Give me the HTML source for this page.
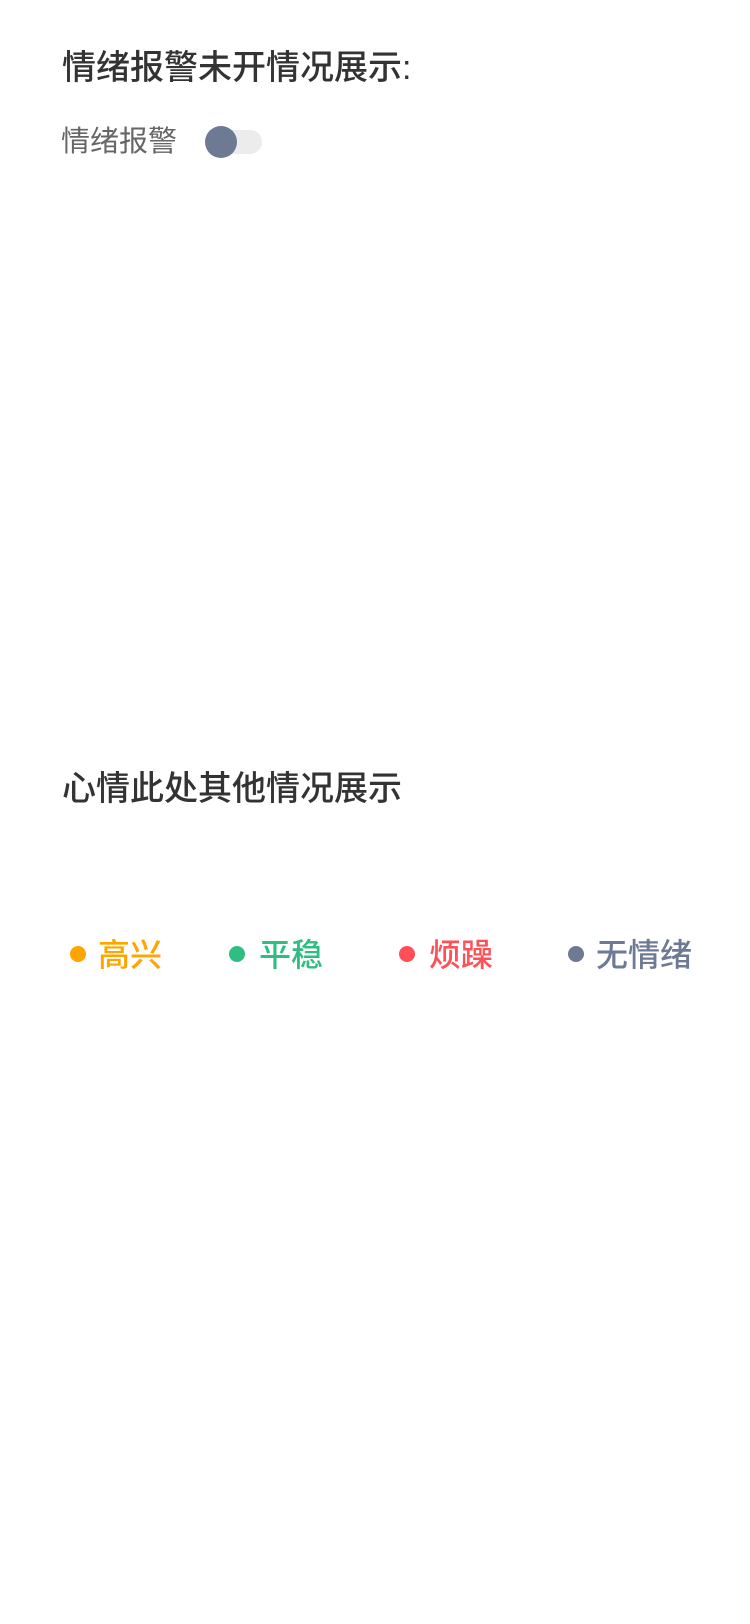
<!DOCTYPE html>
<html><head><meta charset="utf-8"><style>
body{margin:0;width:750px;height:1624px;background:#fff;font-family:"Liberation Sans","Noto Sans CJK SC",sans-serif;position:relative;overflow:hidden}
.a{position:absolute;white-space:nowrap;line-height:1}
.t{font-size:34px;color:#333;left:62px;font-weight:500}
.dot{position:absolute;width:16px;height:16px;border-radius:50%}
.l{font-size:32px;position:absolute;line-height:1;font-weight:500}
</style></head><body>
<div class="a t" style="top:51px">情绪报警未开情况展示:</div>
<div class="a" style="left:61px;top:128px;font-size:29px;color:#666">情绪报警</div>
<div style="position:absolute;left:207px;top:130px;width:55px;height:24px;border-radius:12px;background:#ececec"></div>
<div style="position:absolute;left:205px;top:126px;width:32px;height:32px;border-radius:50%;background:#6e7a94"></div>
<div class="a t" style="top:772px">心情此处其他情况展示</div>
<div class="dot" style="left:70px;top:946px;background:#ffa500"></div>
<div class="l" style="left:98px;top:939px;color:#ffa500">高兴</div>
<div class="dot" style="left:229px;top:946px;background:#2fbd82"></div>
<div class="l" style="left:259px;top:939px;color:#2fbd82">平稳</div>
<div class="dot" style="left:399px;top:946px;background:#ff5058"></div>
<div class="l" style="left:429px;top:939px;color:#ff5058">烦躁</div>
<div class="dot" style="left:568px;top:946px;background:#6e7a94"></div>
<div class="l" style="left:596px;top:939px;color:#6e7a94">无情绪</div>
</body></html>
